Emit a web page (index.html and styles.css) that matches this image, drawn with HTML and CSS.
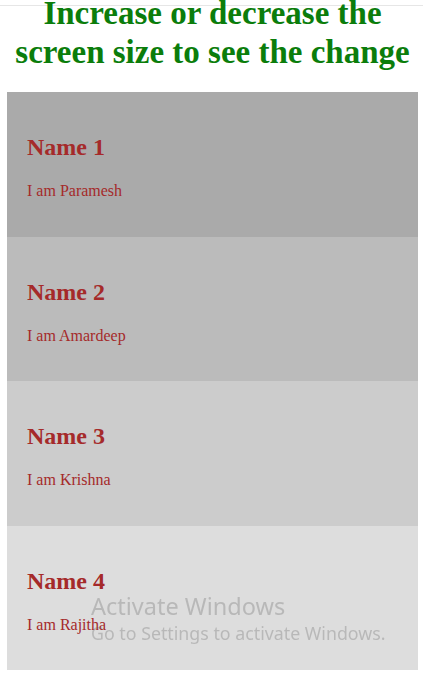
FILE: index.html
```html
<!DOCTYPE html>
<html lang="en">
<head>
<meta charset="utf-8">
<title>Responsive cards</title>
<link rel="stylesheet" href="styles.css">
</head>
<body>
<div class="topline"></div>
<h1 class="title">Increase or decrease the screen size to see the change</h1>
<div class="cards">
  <div class="card card-1">
    <h2 class="card-name">Name 1</h2>
    <p class="card-text">I am Paramesh</p>
  </div>
  <div class="card card-2">
    <h2 class="card-name">Name 2</h2>
    <p class="card-text">I am Amardeep</p>
  </div>
  <div class="card card-3">
    <h2 class="card-name">Name 3</h2>
    <p class="card-text">I am Krishna</p>
  </div>
  <div class="card card-4">
    <h2 class="card-name">Name 4</h2>
    <p class="card-text">I am Rajitha</p>
  </div>
</div>
<div class="watermark">
  <div class="wm-title">Activate Windows</div>
  <div class="wm-sub">Go to Settings to activate Windows.</div>
</div>
</body>
</html>
```

FILE: styles.css
```css
html, body {
  margin: 0;
  padding: 0;
  background: #ffffff;
}

body {
  font-family: "Liberation Serif", "Times New Roman", serif;
  overflow: hidden;
}

.topline {
  height: 1px;
  width: 423px;
  margin-top: 5px;
  background: #e6e6e6;
}

.title {
  width: 411px;
  margin: -12px 0 20px 7px;
  font-size: 33px;
  line-height: 39px;
  font-weight: 700;
  text-align: center;
  color: #0b7d0b;
}

.cards {
  width: 411px;
  margin-left: 7px;
  display: grid;
  grid-auto-rows: 144.5px;
}

.card {
  padding: 22px 20px 18px;
}

.card-1 { background: #aaaaaa; }
.card-2 { background: #bbbbbb; }
.card-3 { background: #cccccc; }
.card-4 { background: #dddddd; }

.card-name {
  margin: 20px 0 21px;
  font-size: 24px;
  font-weight: 700;
  color: #a52a2a;
}

.card-text {
  margin: 0;
  font-size: 16px;
  color: #a52a2a;
}

.watermark {
  position: fixed;
  left: 91px;
  top: 594px;
  font-family: "Noto Sans", "Open Sans", sans-serif;
  color: rgba(90, 90, 90, 0.28);
  pointer-events: none;
}

.wm-title {
  font-size: 23.5px;
  line-height: 24px;
}

.wm-sub {
  margin-top: 5px;
  font-size: 17.8px;
  line-height: 20px;
}
```
